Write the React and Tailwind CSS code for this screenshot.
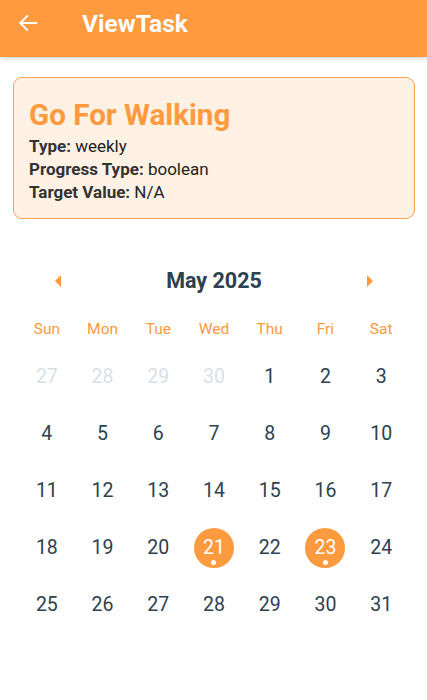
import React from "react";

const ORANGE = "#ff9a3f";

const weeks = [
  [27, 28, 29, 30, 1, 2, 3],
  [4, 5, 6, 7, 8, 9, 10],
  [11, 12, 13, 14, 15, 16, 17],
  [18, 19, 20, 21, 22, 23, 24],
  [25, 26, 27, 28, 29, 30, 31],
];
const days = ["Sun", "Mon", "Tue", "Wed", "Thu", "Fri", "Sat"];
const marked = [21, 23];

const App = () => {
  return (
    <div
      className="w-[427px] h-[700px] bg-white overflow-hidden"
      style={{ fontFamily: "Roboto, sans-serif" }}
    >
      {/* header */}
      <div className="h-[57px] bg-[#ff9a3f] flex items-start pt-[11px] shadow-[0_2px_4px_rgba(0,0,0,0.15)]">
        <svg
          className="ml-[17px] mt-[1px]"
          width="22"
          height="22"
          viewBox="0 0 24 24"
          fill="none"
          stroke="white"
          strokeWidth="2.2"
          strokeLinecap="square"
        >
          <path d="M21 12H4M11 4.5L3.5 12L11 19.5" />
        </svg>
        <span className="ml-[43px] text-white text-[24.5px] leading-[26px] font-bold">
          ViewTask
        </span>
      </div>

      {/* task card */}
      <div className="ml-[13px] w-[402px] mt-[20px] h-[142px] rounded-[9px] border border-[#ffa456] bg-[#fff1e3] px-[15px] pt-[20px]">
        <div className="text-[29.6px] font-bold text-[#ff9a3f] leading-[34px]">
          Go For Walking
        </div>
        <div className="mt-[3px] text-[17px] leading-[23px] text-[#222]">
          <div>
            <span className="font-bold text-[#333]">Type:</span> weekly
          </div>
          <div>
            <span className="font-bold text-[#333]">Progress Type:</span> boolean
          </div>
          <div>
            <span className="font-bold text-[#333]">Target Value:</span> N/A
          </div>
        </div>
      </div>

      {/* calendar */}
      <div className="mx-[19px] mt-[47px] w-[390px]">
        <div className="flex items-center justify-between h-[30px] px-[35px]">
          <svg width="8" height="14" viewBox="0 0 8 14">
            <path d="M7 1L1 7L7 13Z" fill={ORANGE} />
          </svg>
          <span className="text-[21.5px] font-bold text-[#2d4150]">May 2025</span>
          <svg width="8" height="14" viewBox="0 0 8 14">
            <path d="M1 1L7 7L1 13Z" fill={ORANGE} />
          </svg>
        </div>
        <div className="grid grid-cols-7 mt-[22px]">
          {days.map((d) => (
            <div key={d} className="text-center text-[15.5px] text-[#ff9a3f]">
              {d}
            </div>
          ))}
        </div>
        <div className="mt-[16px] flex flex-col gap-[17px]">
          {weeks.map((w, wi) => (
            <div key={wi} className="grid grid-cols-7">
              {w.map((d, di) => {
                const disabled = wi === 0 && d > 7;
                const isMarked = !disabled && marked.includes(d);
                return (
                  <div key={di} className="flex justify-center">
                    {isMarked ? (
                      <div className="relative w-[40px] h-[40px] rounded-full bg-[#ff9a3f] flex items-center justify-center text-white text-[19.5px]">
                        <span className="mb-[2px]">{d}</span>
                        <span className="absolute bottom-[3px] w-[5px] h-[5px] rounded-full bg-white"></span>
                      </div>
                    ) : (
                      <div
                        className={`w-[40px] h-[40px] flex items-center justify-center text-[19.5px] ${
                          disabled ? "text-[#d9e1e8]" : "text-[#2d4150]"
                        }`}
                      >
                        <span className="mb-[2px]">{d}</span>
                      </div>
                    )}
                  </div>
                );
              })}
            </div>
          ))}
        </div>
      </div>
    </div>
  );
};

export default App;
